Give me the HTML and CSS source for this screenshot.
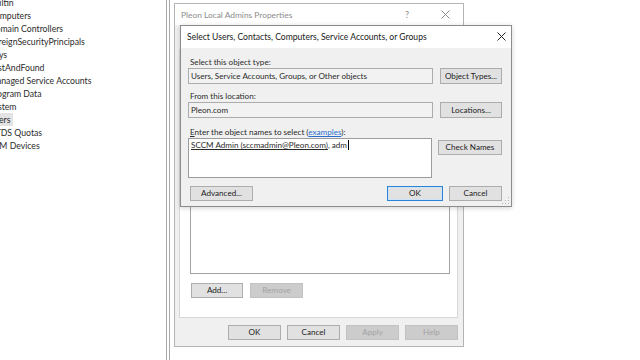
FILE: index.html
```html
<!DOCTYPE html>
<html lang="en">
<head>
<meta charset="utf-8">
<title>Select Users</title>
<link rel="stylesheet" href="styles.css">
</head>
<body>
<div class="desktop">
  <nav class="tree">
    <ul class="tree-list">
      <li>Builtin</li>
      <li>Computers</li>
      <li>Domain Controllers</li>
      <li>ForeignSecurityPrincipals</li>
      <li>Keys</li>
      <li>LostAndFound</li>
      <li>Managed Service Accounts</li>
      <li>Program Data</li>
      <li>System</li>
      <li><span class="sel">Users</span></li>
      <li>NTDS Quotas</li>
      <li>TPM Devices</li>
    </ul>
  </nav>
  <div class="splitter"></div>
  <main class="workspace">
    <section class="win props">
      <header class="titlebar props-titlebar">
        <span class="title">Pleon Local Admins Properties</span>
        <span class="tb-help">?</span>
        <span class="tb-close">
          <svg width="9" height="9" viewBox="0 0 9 9"><path d="M0.5 0.5L8.5 8.5M8.5 0.5L0.5 8.5" stroke="#8a8a8a" stroke-width="1" fill="none"/></svg>
        </span>
      </header>
      <div class="props-body">
        <div class="tab-panel">
          <div class="listbox"></div>
          <div class="btn-row">
            <button class="btn btn-add">Add...</button>
            <button class="btn btn-remove" disabled>Remove</button>
          </div>
        </div>
        <footer class="props-footer">
          <button class="btn fbtn">OK</button>
          <button class="btn fbtn">Cancel</button>
          <button class="btn fbtn" disabled>Apply</button>
          <button class="btn fbtn" disabled>Help</button>
        </footer>
      </div>
    </section>

    <section class="win select">
      <header class="titlebar select-titlebar">
        <span class="title">Select Users, Contacts, Computers, Service Accounts, or Groups</span>
        <span class="sel-close">
          <svg width="9" height="9" viewBox="0 0 9 9"><path d="M0.5 0.5L8.5 8.5M8.5 0.5L0.5 8.5" stroke="#222" stroke-width="1" fill="none"/></svg>
        </span>
      </header>
      <div class="select-body">
        <div class="label l1">Select this object type:</div>
        <div class="row r1">
          <div class="field ro">Users, Service Accounts, Groups, or Other objects</div>
          <button class="btn side w62">Object Types...</button>
        </div>
        <div class="label l2">From this location:</div>
        <div class="row r2">
          <div class="field ro">Pleon.com</div>
          <button class="btn side w62">Locations...</button>
        </div>
        <div class="label l3"><u>E</u>nter the object names to select (<a class="link">examples</a>):</div>
        <div class="row r3">
          <div class="field area"><span class="resolved">SCCM Admin (sccmadmin@Pleon.com)</span>, adm<span class="caret"></span></div>
          <button class="btn side w64 chk">Check Names</button>
        </div>
        <div class="row bottom">
          <button class="btn adv">Advanced...</button>
          <button class="btn ok default">OK</button>
          <button class="btn cancel">Cancel</button>
        </div>
        <svg class="grip" width="8" height="8" viewBox="0 0 8 8">
          <rect x="6" y="0" width="1" height="1" fill="#b5b5b5"/>
          <rect x="3" y="3" width="1" height="1" fill="#b5b5b5"/>
          <rect x="6" y="3" width="1" height="1" fill="#b5b5b5"/>
          <rect x="0" y="6" width="1" height="1" fill="#b5b5b5"/>
          <rect x="3" y="6" width="1" height="1" fill="#b5b5b5"/>
          <rect x="6" y="6" width="1" height="1" fill="#b5b5b5"/>
        </svg>
      </div>
    </section>
  </main>
</div>
</body>
</html>
```

FILE: styles.css
```css
* { box-sizing: border-box; }
html, body { margin: 0; padding: 0; }
body {
  width: 640px;
  height: 360px;
  overflow: hidden;
  background: #ffffff;
  font-family: Lato, "Noto Sans", "Liberation Sans", sans-serif;
  font-size: 8.1px;
  color: #2a2a2a;
}
.desktop {
  display: flex;
  width: 640px;
  height: 360px;
}

/* left tree */
.tree {
  width: 166px;
  flex: none;
  overflow: hidden;
  background: #fff;
}
.tree-list {
  list-style: none;
  margin: -4px 0 0 -11px;
  padding: 0;
}
.tree-list li {
  height: 13px;
  line-height: 13px;
  white-space: nowrap;
  font-size: 8.7px;
  color: #2b2b2b;
}
.tree-list .sel {
  background: #e3e3e3;
  padding: 1px 3px 1px 0;
}
.splitter {
  width: 4px;
  flex: none;
  border-left: 1px solid #a9a9a9;
  border-right: 1px solid #a9a9a9;
  background: #fff;
}

.workspace {
  position: relative;
  flex: 1;
  background: #fff;
}

/* windows */
.win {
  position: absolute;
  display: flex;
  flex-direction: column;
}
.titlebar {
  display: flex;
  align-items: center;
  background: #fff;
  flex: none;
}

/* properties window */
.props {
  left: 4px;
  top: 3px;
  width: 290px;
  height: 344px;
  border: 1px solid #b4b4b4;
  background: #f0f0f0;
}
.props-titlebar {
  height: 21px;
  padding-left: 6px;
}
.props-titlebar .title {
  color: #8c8c8c;
  font-size: 8.4px;
}
.tb-help {
  margin-left: auto;
  width: 12px;
  text-align: center;
  color: #8c8c8c;
  font-size: 9px;
}
.tb-close {
  width: 36px;
  display: flex;
  justify-content: center;
  margin-left: 14px;
  margin-right: 0;
}
.props-body {
  flex: 1;
  display: flex;
  flex-direction: column;
  padding: 0 5px 0 4px;
}
.tab-panel {
  flex: 1;
  margin-top: 24px;
  background: #fff;
  border: 1px solid #d6d6d6;
  padding: 10px 7px 19px 10px;
  display: flex;
  flex-direction: column;
}
.listbox {
  flex: 1;
  border: 1px solid #a3a3a3;
  background: #fff;
}
.btn-row {
  display: flex;
  gap: 7px;
  margin-top: 9px;
  padding-left: 1px;
}
.btn {
  font-family: inherit;
  font-size: 8.1px;
  color: #222;
  background: #e1e1e1;
  border: 1px solid #adadad;
  height: 15px;
  padding: 0;
  margin: 0;
  line-height: 13px;
  text-align: center;
}
.btn:disabled {
  background: #cccccc;
  border-color: #c2c2c2;
  color: #a3a3a3;
}
.btn-add { width: 52px; }
.btn-remove { width: 53px; }
.props-footer {
  height: 28px;
  flex: none;
  display: flex;
  justify-content: flex-end;
  align-items: flex-start;
  gap: 6px;
  padding-top: 7px;
}
.fbtn { width: 53px; }

/* select window */
.select {
  left: 10px;
  top: 25px;
  width: 332px;
  height: 182px;
  border: 1px solid #8c8c8c;
  background: #f0f0f0;
  box-shadow: 0 1px 5px rgba(0,0,0,0.18);
}
.select-titlebar {
  height: 22px;
  padding-left: 6px;
}
.select-titlebar .title {
  color: #1a1a1a;
  font-size: 8.6px;
}
.sel-close {
  margin-left: auto;
  width: 20px;
  margin-right: 0;
  display: flex;
  justify-content: center;
  padding-bottom: 2px;
}
.select-body {
  position: relative;
  flex: 1;
  display: flex;
  flex-direction: column;
  padding: 9px 9px 0 7px;
}
.label {
  height: 10px;
  line-height: 10px;
  padding-left: 2px;
  color: #2a2a2a;
  white-space: nowrap;
}
.label u { text-decoration: underline; }
.l2 { margin-top: 7px; }
.l3 { margin-top: 9px; }
.link {
  color: #2a6fcf;
  text-decoration: underline;
}
.row {
  display: flex;
  align-items: flex-start;
}
.r1, .r2 { margin-top: 1px; justify-content: space-between; }
.r3 { margin-top: 1px; justify-content: space-between; }
.field {
  width: 245px;
  height: 16px;
  line-height: 14px;
  border: 1px solid #acacac;
  padding-left: 2px;
  white-space: nowrap;
  overflow: hidden;
  color: #2a2a2a;
}
.ro { background: #f2f2f2; }
.area {
  width: 244px;
  height: 40px;
  background: #fff;
  border-color: #9c9c9c;
  line-height: 12px;
  padding-top: 0;
  padding-left: 2px;
}
.resolved { text-decoration: underline; }
.caret {
  display: inline-block;
  width: 1px;
  height: 10px;
  background: #000;
  vertical-align: -2px;
  margin-left: 1px;
}
.side { height: 16px; line-height: 14px; }
.w62 { width: 62px; }
.w64 { width: 64px; }
.chk { margin-top: 2px; height: 15px; line-height: 13px; }
.bottom {
  margin-top: 8px;
  gap: 6px;
}
.adv { width: 63px; margin-left: 2px; }
.ok { width: 56px; margin-left: auto; }
.default {
  border: 1px solid #2b84d6;
  box-shadow: inset 0 0 0 1px #cfe3f6;
}
.cancel { width: 53px; }
.grip {
  position: absolute;
  right: 1px;
  bottom: 1px;
}
```
